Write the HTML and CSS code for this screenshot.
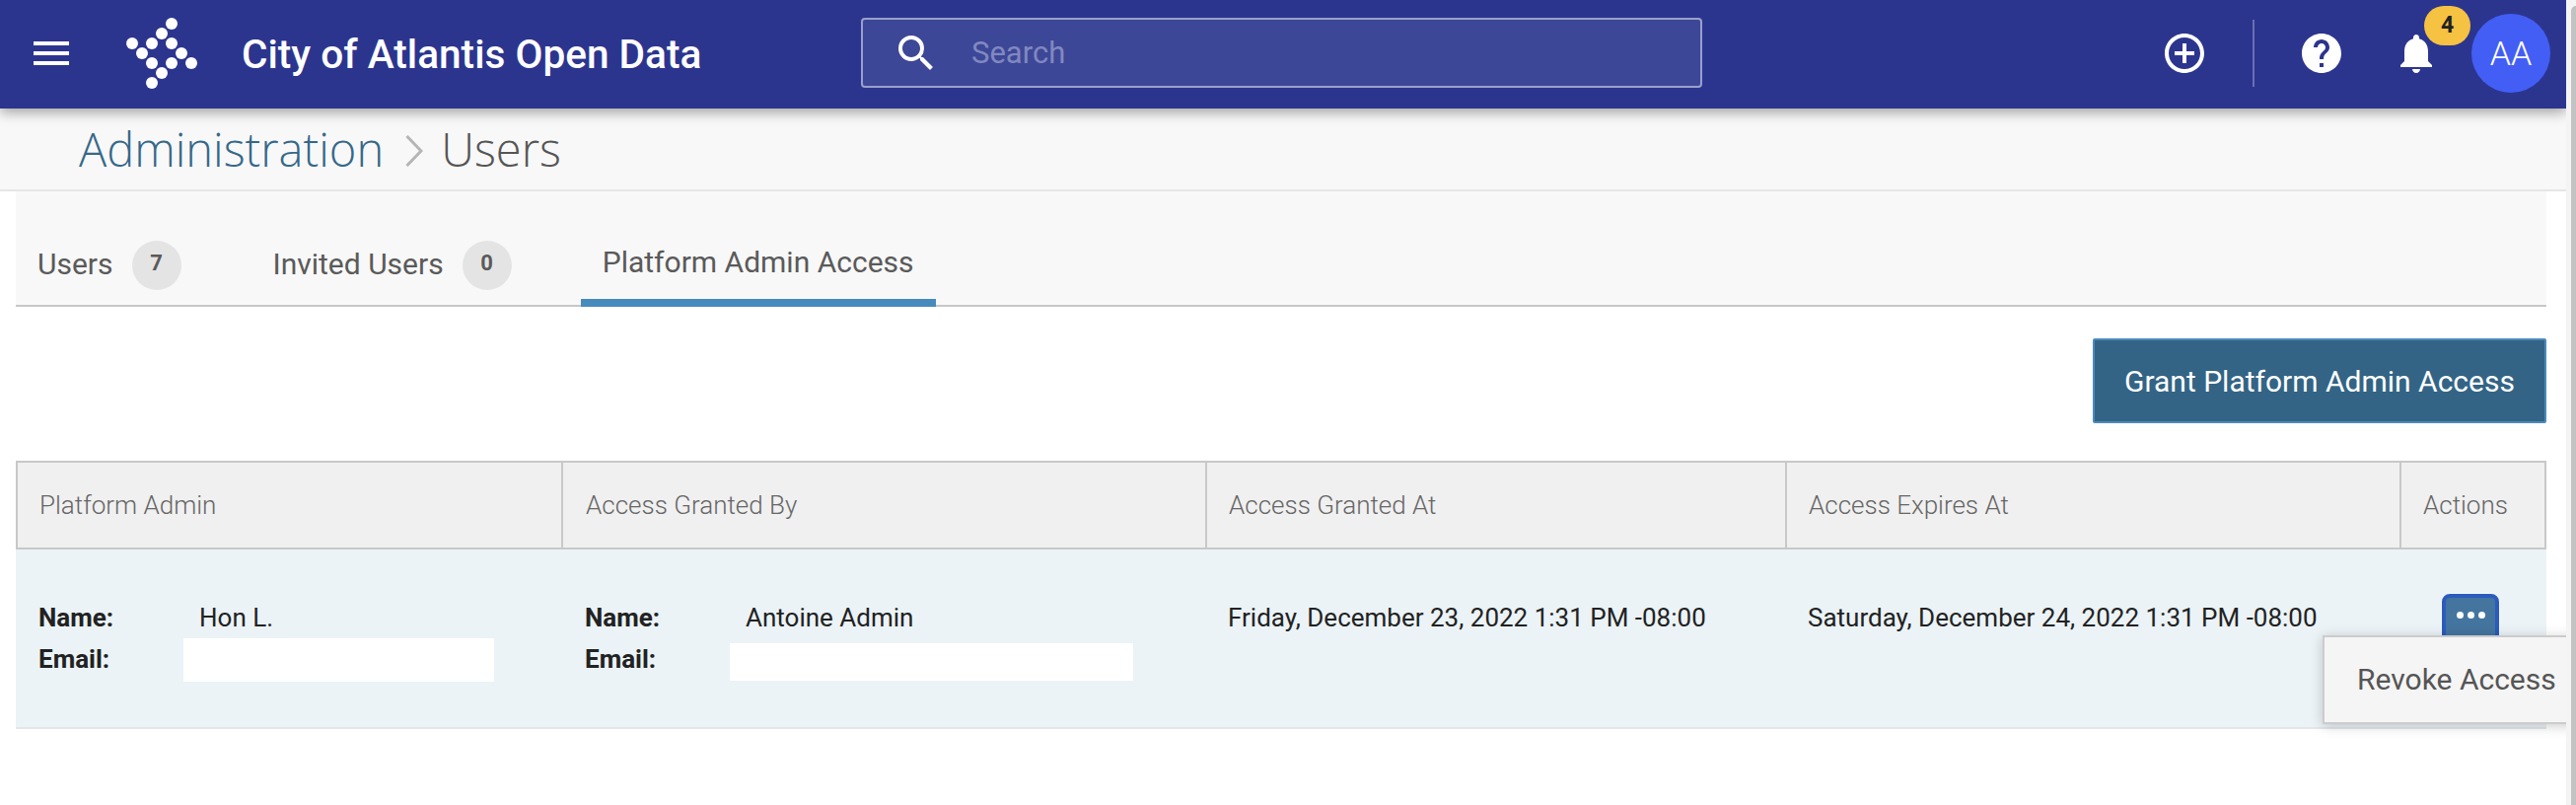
FILE: index.html
```html
<!DOCTYPE html>
<html lang="en">
<head>
    <meta charset="UTF-8">
    <meta name="viewport" content="width=device-width, initial-scale=1.0">
    <title>City of Atlantis Open Data - Users</title>
    <link rel="stylesheet" href="styles.css">
</head>
<body>
    <div class="page">
        <header class="topbar">
            <div class="menu-icon"><span></span><span></span><span></span></div>
            <svg class="logo" width="80" height="80" viewBox="0 5 80 80" fill="#fff">
                <circle cx="46" cy="14" r="6"/>
                <circle cx="36" cy="24" r="6"/>
                <circle cx="6" cy="34" r="6"/>
                <circle cx="26" cy="34" r="6"/>
                <circle cx="46" cy="34" r="6"/>
                <circle cx="16" cy="44" r="6"/>
                <circle cx="56" cy="44" r="6"/>
                <circle cx="26" cy="54" r="6"/>
                <circle cx="46" cy="54" r="6"/>
                <circle cx="66" cy="54" r="6"/>
                <circle cx="36" cy="64" r="6"/>
                <circle cx="26" cy="74" r="6"/>
            </svg>
            <div class="site-title">City of Atlantis Open Data</div>
            <div class="search">
                <svg width="48" height="48" viewBox="0 0 24 24" fill="#fff"><path d="M15.5 14h-.79l-.28-.27A6.47 6.47 0 0 0 16 9.5 6.5 6.5 0 1 0 9.5 16c1.61 0 3.09-.59 4.23-1.57l.27.28v.79l5 4.99L20.49 19l-4.99-5zm-6 0C7.01 14 5 11.99 5 9.5S7.01 5 9.5 5 14 7.01 14 9.5 11.99 14 9.5 14z"/></svg>
                <span>Search</span>
            </div>
            <div class="topbar-right">
                <svg class="add-icon" width="48" height="48" viewBox="0 0 24 24" fill="#fff"><path d="M13 7h-2v4H7v2h4v4h2v-4h4v-2h-4V7zm-1-5C6.48 2 2 6.48 2 12s4.48 10 10 10 10-4.48 10-10S17.52 2 12 2zm0 18c-4.41 0-8-3.59-8-8s3.59-8 8-8 8 3.59 8 8-3.59 8-8 8z"/></svg>
                <div class="divider"></div>
                <svg class="help-icon" width="48" height="48" viewBox="0 0 24 24" fill="#fff"><path d="M12 2C6.48 2 2 6.48 2 12s4.48 10 10 10 10-4.48 10-10S17.52 2 12 2zm1 17h-2v-2h2v2zm2.07-7.75l-.9.92C13.45 12.9 13 13.5 13 15h-2v-.5c0-1.1.45-2.1 1.17-2.83l1.24-1.26c.37-.36.59-.86.59-1.41 0-1.1-.9-2-2-2s-2 .9-2 2H8c0-2.21 1.79-4 4-4s4 1.79 4 4c0 .88-.36 1.68-.93 2.25z"/></svg>
                <div class="bell">
                    <svg width="48" height="48" viewBox="0 0 24 24" fill="#fff"><path d="M12 22c1.1 0 2-.9 2-2h-4c0 1.1.9 2 2 2zm6-6v-5c0-3.07-1.63-5.64-4.5-6.32V4c0-.83-.67-1.5-1.5-1.5s-1.5.67-1.5 1.5v.68C7.64 5.36 6 7.92 6 11v5l-2 2v1h16v-1l-2-2z"/></svg>
                    <span class="bell-count">4</span>
                </div>
                <div class="avatar">AA</div>
            </div>
        </header>

        <div class="breadcrumb">
            <a class="crumb-link">Administration</a>
            <svg class="crumb-sep" width="18" height="32" viewBox="0 0 18 32" fill="none" stroke="#b5b5b5" stroke-width="3"><path d="M1.5 1 L16 16 L1.5 31"/></svg>
            <span class="crumb-current">Users</span>
        </div>

        <div class="content">
            <nav class="tabs">
                <div class="tab">Users <span class="count">7</span></div>
                <div class="tab">Invited Users <span class="count">0</span></div>
                <div class="tab active">Platform Admin Access</div>
            </nav>

            <div class="toolbar">
                <button class="grant-button">Grant Platform Admin Access</button>
            </div>

            <div class="table">
                <div class="row head">
                    <div class="cell col-admin">Platform Admin</div>
                    <div class="cell col-by">Access Granted By</div>
                    <div class="cell col-at">Access Granted At</div>
                    <div class="cell col-exp">Access Expires At</div>
                    <div class="cell col-act">Actions</div>
                </div>
                <div class="row body-row">
                    <div class="cell col-admin">
                        <div class="person">
                            <b>Name:</b><span>Hon L.</span>
                            <b>Email:</b><i class="mask mask-admin"></i>
                        </div>
                    </div>
                    <div class="cell col-by">
                        <div class="person">
                            <b>Name:</b><span>Antoine Admin</span>
                            <b>Email:</b><i class="mask mask-by"></i>
                        </div>
                    </div>
                    <div class="cell col-at">Friday, December 23, 2022 1:31 PM -08:00</div>
                    <div class="cell col-exp">Saturday, December 24, 2022 1:31 PM -08:00</div>
                    <div class="cell col-act">
                        <div class="dots-button"><span></span><span></span><span></span></div>
                        <div class="action-menu">Revoke Access</div>
                    </div>
                </div>
            </div>
        </div>
    </div>
    <div class="scrollbar"><div class="thumb"></div></div>
</body>
</html>
```

FILE: styles.css
```css
* {
    box-sizing: border-box;
}

html, body {
    height: 100%;
}

body {
    margin: 0;
    display: flex;
    height: 816px;
    overflow: hidden;
    background: #fff;
    font-family: Roboto, sans-serif;
    color: #222;
}

.page {
    width: 2602px;
    overflow: hidden;
    position: relative;
}

.scrollbar {
    width: 10px;
    background: #f4f4f4;
    padding-left: 5px;
}

.thumb {
    height: 100%;
    background: #c2c2c2;
    border-radius: 5px 0 0 0;
    margin-top: 6px;
}

.topbar {
    height: 110px;
    background: #2c358e;
    display: flex;
    align-items: center;
    box-shadow: 0 4px 12px rgba(0, 0, 0, 0.35);
    position: relative;
    z-index: 2;
}

.menu-icon {
    width: 36px;
    margin-left: 34px;
    margin-bottom: 2px;
    display: flex;
    flex-direction: column;
    gap: 6px;
}

.menu-icon span {
    height: 4px;
    background: #fff;
}

.logo {
    margin-left: 58px;
    flex: none;
}

.site-title {
    margin-left: 37px;
    width: 628px;
    font-size: 40.6px;
    font-weight: 500;
    color: #fff;
}

.search {
    width: 853px;
    height: 71px;
    margin-bottom: 3px;
    background: #3d4797;
    border: 2px solid #9ba0ca;
    border-radius: 4px;
    display: flex;
    align-items: center;
    padding-left: 30px;
    font-size: 31px;
    color: #8188c0;
}

.search span {
    margin-left: 32px;
}

.topbar-right {
    margin-left: auto;
    margin-bottom: 2px;
    display: flex;
    align-items: center;
    padding-right: 16px;
}

.divider {
    width: 2px;
    height: 68px;
    background: #6970b0;
    margin: 0 44px 0 45px;
}

.bell {
    position: relative;
    width: 48px;
    height: 48px;
    margin-left: 48px;
}

.bell-count {
    position: absolute;
    left: 32px;
    top: -24px;
    width: 47px;
    height: 40px;
    border-radius: 20px;
    background: #f5c242;
    color: #222;
    font-size: 23px;
    font-weight: 700;
    line-height: 40px;
    text-align: center;
}

.avatar {
    width: 80px;
    height: 80px;
    border-radius: 50%;
    background: #435ef5;
    color: #fff;
    font-size: 34px;
    font-weight: 300;
    line-height: 80px;
    text-align: center;
    margin-left: 32px;
}

.breadcrumb {
    height: 84px;
    background: #f8f8f8;
    border-bottom: 2px solid #e6e6e6;
    display: flex;
    align-items: center;
    padding-left: 80px;
    font-family: "Open Sans", sans-serif;
    font-size: 47px;
    font-weight: 300;
}

.crumb-link {
    color: #35688a;
}

.crumb-sep {
    margin: 4px 18px 0 22px;
}

.crumb-current {
    color: #555;
}

.content {
    padding: 0 20px 0 16px;
}

.tabs {
    height: 117px;
    background: #f8f8f8;
    border-bottom: 2px solid #c8c8c8;
    display: flex;
    align-items: flex-end;
    font-size: 30px;
    color: #5a5a5a;
}

.tab {
    height: 84px;
    display: flex;
    align-items: center;
    padding: 0 22px 4px;
    margin-bottom: -2px;
    gap: 19px;
}

.tab:nth-child(2) {
    margin-left: 49px;
}

.tab.active {
    margin-left: 48px;
    border-bottom: 8px solid #478bbd;
    padding: 0;
    width: 360px;
    justify-content: center;
}

.count {
    width: 50px;
    height: 50px;
    margin-top: 4px;
    border-radius: 50%;
    background: #e4e4e4;
    font-size: 22px;
    font-weight: 700;
    line-height: 46px;
    text-align: center;
}

.toolbar {
    display: flex;
    justify-content: flex-end;
    padding-top: 32px;
}

.grant-button {
    width: 460px;
    height: 86px;
    background: #336485;
    border: 2px solid #4a8abd;
    border-radius: 2px;
    color: #fff;
    font-family: Roboto, sans-serif;
    font-size: 30px;
}

.table {
    margin-top: 38px;
}

.row {
    display: flex;
}

.row.head {
    height: 90px;
    background: #f0f0f0;
    border: 2px solid #c8c8c8;
    font-size: 26px;
    font-weight: 300;
    color: #666;
}

.row.head .cell {
    display: flex;
    align-items: center;
    border-right: 2px solid #c8c8c8;
}

.row.head .cell:first-child {
    width: 553px;
    padding-left: 22px;
}

.row.head .cell:last-child {
    border-right: none;
}

.body-row {
    height: 182px;
    background: #ebf3f7;
    border-bottom: 2px solid #e2e6e8;
    font-size: 26px;
    padding-top: 48px;
    line-height: 42px;
}

.cell {
    padding-left: 23px;
    flex: none;
}

.col-admin { width: 554px; }
.col-by { width: 653px; }
.col-at { width: 588px; padding-left: 22px; }
.col-exp { width: 623px; padding-left: 22px; }
.col-act { flex: 1; position: relative; padding-left: 22px; }

.person {
    display: grid;
    grid-template-columns: 163px 1fr;
    position: relative;
}

.person b {
    font-weight: 700;
}

.mask {
    display: block;
    background: #fff;
    position: absolute;
}

.mask-admin {
    left: 147px;
    top: 42px;
    width: 315px;
    height: 44px;
}

.mask-by {
    left: 147px;
    top: 47px;
    width: 409px;
    height: 38px;
}

.dots-button {
    position: absolute;
    left: 42px;
    top: -3px;
    width: 58px;
    height: 50px;
    background: #44759f;
    border: 4px solid #2b5bbd;
    border-radius: 8px;
    box-shadow: 0 0 0 1px #f4f8fb;
    display: flex;
    justify-content: center;
    padding-top: 14px;
    gap: 4px;
}

.dots-button span {
    width: 7px;
    height: 7px;
    border-radius: 50%;
    background: #fff;
}

.action-menu {
    position: absolute;
    left: -79px;
    top: 39px;
    width: 280px;
    height: 90px;
    background: #f5f5f5;
    border: 2px solid #ccc;
    box-shadow: 0 2px 12px rgba(0, 0, 0, 0.2);
    font-size: 30px;
    color: #555;
    line-height: 86px;
    padding-left: 33px;
    white-space: nowrap;
}
```
